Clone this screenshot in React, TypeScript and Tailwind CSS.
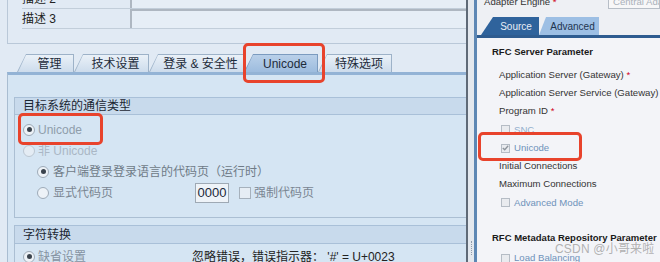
import React from "react";

const FONT = "font-['Liberation_Sans','Noto_Sans_CJK_SC',sans-serif]";

type TabProps = {
  label: string;
  width: string;
  selected?: boolean;
};

function SapTab({ label, width, selected }: TabProps) {
  return (
    <div
      className={`${width} h-[18px] pt-[1px] pr-[1px] pl-[1px] [clip-path:polygon(0_100%,9px_0,100%_0,100%_100%)] ${
        selected ? "bg-[#7b9bbf]" : "bg-[#9db2c8]"
      }`}
    >
      <div
        className={`h-full flex items-center justify-center pl-[8px] text-[12px] text-[#1d2b3a] [clip-path:polygon(0_100%,8px_0,100%_0,100%_100%)] bg-gradient-to-b ${
          selected ? "from-[#b9d0e9] to-[#9dbcde]" : "from-[#eaf1f8] to-[#cddcec]"
        }`}
      >
        {label}
      </div>
    </div>
  );
}

function Radio({ checked, faint }: { checked?: boolean; faint?: boolean }) {
  return (
    <span
      className={`w-[12px] h-[12px] shrink-0 rounded-full border flex items-center justify-center ${
        faint ? "border-[#bcc7d2] bg-[#e4ecf4]" : "border-[#9eabb8] bg-[#edf2f7]"
      }`}
    >
      {checked && <span className="w-[5px] h-[5px] rounded-full bg-[#3a434d]" />}
    </span>
  );
}

function SmallCheck({ checked }: { checked?: boolean }) {
  return (
    <span className="w-[9px] h-[9px] shrink-0 border border-[#b5bcc5] bg-[#e9ebef] flex items-center justify-center">
      {checked && (
        <svg width="7" height="6" viewBox="0 0 7 6" fill="none">
          <path d="M0.8 3L2.7 4.8L6.2 0.8" stroke="#8d949c" strokeWidth="1.3" />
        </svg>
      )}
    </span>
  );
}

function RightRow({ children }: { children: React.ReactNode }) {
  return <div className="h-[18.25px] flex items-center pl-[7px] text-[9.6px] text-[#333]">{children}</div>;
}

function CheckRow({ label, checked, light }: { label: string; checked?: boolean; light?: boolean }) {
  return (
    <div className="h-[18.25px] flex items-center pl-[9px] gap-[4px] text-[9.6px]">
      <SmallCheck checked={checked} />
      <span className={light ? "text-[#93afcd]" : "text-[#6e92ba]"}>{label}</span>
    </div>
  );
}

function RedBox({ className }: { className: string }) {
  return <div className={`absolute border-[3px] border-[#e8432c] rounded-[5px] ${className}`} />;
}

export default function App() {
  return (
    <div className={`relative w-[660px] h-[262px] overflow-hidden flex whitespace-nowrap bg-[#e1eaf4] ${FONT}`}>
      {/* left: SAP GUI destination */}
      <div className="w-[466px] shrink-0 flex flex-col">
        <div className="ml-[7px] mt-[-11px] border-l border-b border-[#b9c8d8] pb-[14px]">
          {["描述 2", "描述 3"].map((label) => (
            <div key={label} className="ml-[14px] h-[20px] flex border-b border-[#c2ceda]">
              <span className="w-[108px] shrink-0 flex items-center text-[12px] text-[#222]">{label}</span>
              <div className="flex-1 border-l-2 border-t-2 border-[#aeb7c1] bg-[#e6eef6]" />
            </div>
          ))}
        </div>

        <div className="mt-[10px] flex pl-[17px]">
          <SapTab label="管理" width="w-[57px]" />
          <SapTab label="技术设置" width="w-[75px]" />
          <SapTab label="登录 & 安全性" width="w-[95px]" />
          <SapTab label="Unicode" width="w-[74px]" selected />
          <SapTab label="特殊选项" width="w-[74px]" />
        </div>

        <div className="flex-1 ml-[7px] border-l border-[#a9bdd1] border-t-[3px] border-t-[#93b3d5] bg-[#d5e5f3]">
          {/* group 1 */}
          <div className="mt-[22px] ml-[6px] border-l border-b border-[#abbfd3] pb-[13px]">
            <div className="h-[18px] flex items-center pl-[8px] border-t border-b border-[#a9c0d8] bg-[#c8daec] text-[12px] text-[#1c2733]">
              目标系统的通信类型
            </div>
            <div className="pt-[4px] text-[12px]">
              <div className="h-[21px] flex items-center gap-[3px] pl-[8px] text-[#8f9dab]">
                <Radio checked />
                <span>Unicode</span>
              </div>
              <div className="h-[21px] flex items-center gap-[3px] pl-[8px] text-[#aab7c5]">
                <Radio faint />
                <span>非 Unicode</span>
              </div>
              <div className="h-[21px] flex items-center gap-[4px] pl-[22px] text-[#6f7b87]">
                <Radio checked />
                <span>客户端登录登录语言的代码页（运行时）</span>
              </div>
              <div className="h-[22px] flex items-center pl-[22px] text-[#7a8692]">
                <div className="w-[158px] flex items-center gap-[4px]">
                  <Radio />
                  <span>显式代码页</span>
                </div>
                <div className="w-[34px] h-[20px] border border-[#9ea9b4] bg-[#eef3f8] flex items-center justify-center text-[13px] text-[#1b2838]">
                  0000
                </div>
                <span className="ml-[10px] w-[12px] h-[12px] border border-[#a6b1bc] bg-[#e6edf4]" />
                <span className="ml-[3px]">强制代码页</span>
              </div>
            </div>
          </div>

          {/* group 2 */}
          <div className="mt-[7px] ml-[6px] border-l border-[#abbfd3]">
            <div className="h-[19px] flex items-center pl-[8px] border-t border-b border-[#a9c0d8] bg-[#c8daec] text-[12px] text-[#1c2733]">
              字符转换
            </div>
            <div className="pt-[4px] h-[21px] flex items-center pl-[8px] text-[12px]">
              <div className="w-[169px] flex items-center gap-[3px] text-[#8593a2]">
                <Radio checked />
                <span>缺省设置</span>
              </div>
              <span className="text-[#222]">忽略错误，错误指示器： '#' = U+0023</span>
            </div>
          </div>
        </div>
      </div>

      {/* splitter */}
      <div className="w-[2px] shrink-0 bg-[#5f6a77]" />
      <div className="w-[6px] shrink-0 bg-[#e3e8ee] flex flex-col justify-end items-center pb-[7px]">
        <div className="h-[14px] w-[1px] border-l border-dotted border-[#8f9baa]" />
      </div>
      <div className="w-[3px] shrink-0 bg-[#5d87b4]" />

      {/* right: PI channel */}
      <div className="flex-1 min-w-0 overflow-hidden flex flex-col bg-[#f3f4f8] text-[#333]">
        <div className="bg-[#eef0f4]">
          <div className="mt-[-5px] h-[14px] flex items-center pl-[7px] text-[9.6px]">
            <span className="w-[124px] shrink-0">
              Adapter Engine <span className="text-[#d0021b]">*</span>
            </span>
            <div className="flex-1 min-w-0 overflow-hidden h-full border border-[#b7bec7] bg-[#f7f7f8] pl-[4px] flex items-center text-[#aab1ba]">
              Central Ada
            </div>
          </div>
          <div className="mt-[8px] flex pl-[4px]">
            <div className="w-[58px] h-[18px] [clip-path:polygon(0_100%,12px_0,100%_0,100%_100%)] bg-[#2f639c] flex items-center justify-center pl-[12px] text-[10px] text-[#e8eef6]">
              Source
            </div>
            <div className="w-[60px] h-[18px] [clip-path:polygon(0_100%,7px_0,100%_0,100%_100%)] bg-[#9dbfe4] flex items-center justify-center pl-[7px] text-[10px] text-[#1d3550]">
              Advanced
            </div>
          </div>
          <div className="h-[3px] bg-[#2e5c90]" />
        </div>

        <div className="pl-[15px]">
          <div className="mt-[7px] h-[14px] flex items-center text-[9.5px] font-bold text-[#1a1a1a]">
            RFC Server Parameter
          </div>
          <div className="mt-[7px]">
            <RightRow>
              Application Server (Gateway)&nbsp;<span className="text-[#d0021b]">*</span>
            </RightRow>
            <RightRow>Application Server Service (Gateway)</RightRow>
            <RightRow>
              Program ID&nbsp;<span className="text-[#d0021b]">*</span>
            </RightRow>
            <CheckRow label="SNC" light />
            <CheckRow label="Unicode" checked />
            <RightRow>Initial Connections</RightRow>
            <RightRow>Maximum Connections</RightRow>
            <CheckRow label="Advanced Mode" />
          </div>
          <div className="mt-[19px] h-[14px] flex items-center text-[9.5px] font-bold text-[#1a1a1a]">
            RFC Metadata Repository Parameter
          </div>
          <div className="mt-[4px]">
            <CheckRow label="Load Balancing" />
          </div>
        </div>
      </div>

      {/* annotations */}
      <RedBox className="left-[243px] top-[43px] w-[82px] h-[40px]" />
      <RedBox className="left-[18px] top-[113px] w-[85px] h-[32px]" />
      <RedBox className="left-[478px] top-[132px] w-[104px] h-[29px]" />
      <div className="absolute left-[555px] top-[240px] text-[12px] text-[#a9a9a9]/90 tracking-[0.2px]">
        CSDN @小哥来啦
      </div>
    </div>
  );
}
